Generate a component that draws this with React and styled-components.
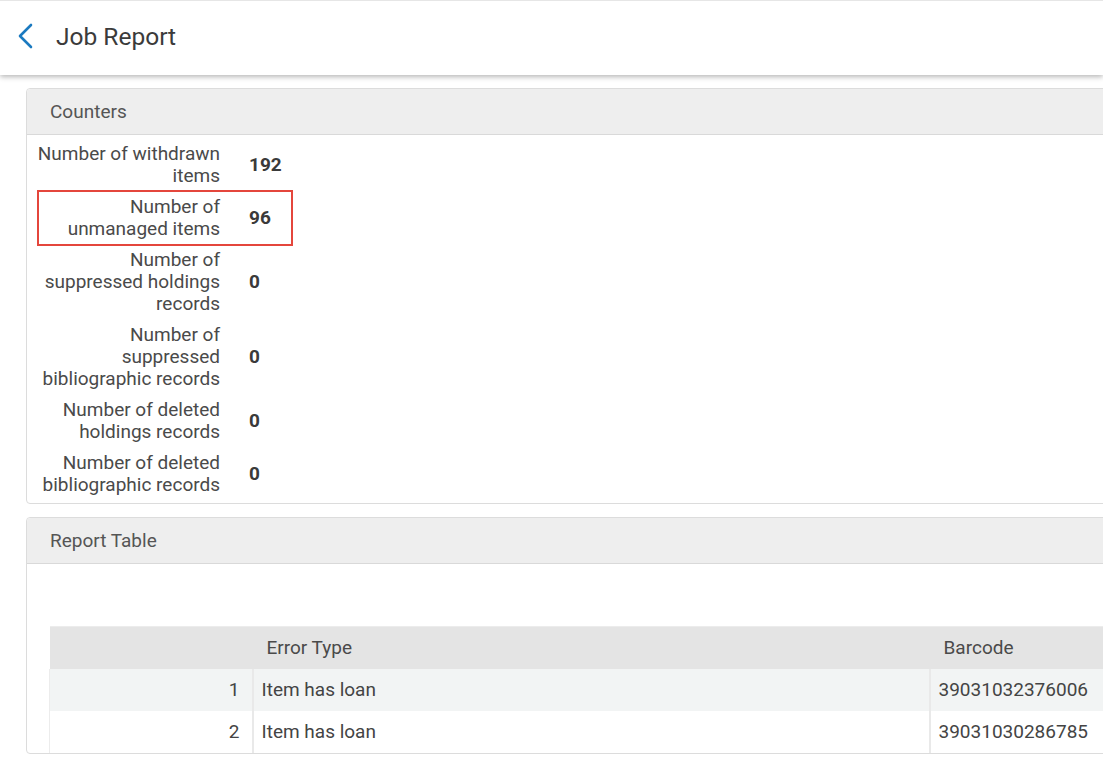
import React from 'react';
import styled, {createGlobalStyle} from 'styled-components';

const GlobalStyle = createGlobalStyle`
    html, body {
        margin: 0;
        padding: 0;
        background: #fff;
        overflow: hidden;
    }
    body {
        font-family: Roboto, "Liberation Sans", Arial, sans-serif;
        color: #444;
    }
`;

const Page = styled.div`
    width: 1103px;
    height: 757px;
    overflow: hidden;
`;

const TopBar = styled.header`
    height: 74px;
    display: flex;
    align-items: center;
    border-top: 1px solid #e6e6e6;
    background: #fff;
    box-shadow: 0 2px 5px rgba(0, 0, 0, 0.28);
    position: relative;
    z-index: 1;
`;

const BackButton = styled.button`
    border: 0;
    background: none;
    padding: 0;
    margin-left: 15px;
    width: 20px;
    height: 28px;
    display: flex;
    align-items: center;
    justify-content: center;
    cursor: pointer;
    position: relative;
    top: -2px;
`;

const Title = styled.h1`
    margin: 0 0 0 21px;
    font-size: 24.5px;
    font-weight: 400;
    color: #3b3b3b;
    position: relative;
    top: -2px;
`;

const Main = styled.main`
    padding: 13px 0 0 26px;
    display: flex;
    flex-direction: column;
    gap: 13px;
`;

const Panel = styled.section`
    width: 1100px;
    border: 1px solid #dcdcdc;
    border-radius: 4px;
    background: #fff;
`;

const PanelHeader = styled.div`
    height: 45px;
    display: flex;
    align-items: center;
    padding-left: 23px;
    background: #eeeeee;
    border-bottom: 1px solid #d9d9d9;
    border-radius: 4px 4px 0 0;
    font-size: 19px;
    color: #555;
`;

const CounterList = styled.div`
    padding: 3px 0 3px 8px;
    display: flex;
    flex-direction: column;
`;

const CounterRow = styled.div`
    position: relative;
    display: grid;
    grid-template-columns: 185px auto;
    column-gap: 29px;
    align-items: center;
    width: max-content;
    padding: 4.5px 0;
    font-size: 19px;
    line-height: 22px;

    ${p => p.$highlight && `
        &::after {
            content: '';
            position: absolute;
            top: -1px;
            bottom: -2px;
            left: 2px;
            right: -22px;
            border: 2px solid #e4463c;
        }
    `}
`;

const CounterLabel = styled.div`
    text-align: right;
    color: #4a4a4a;
`;

const CounterValue = styled.div`
    font-weight: 700;
    color: #3a3a3a;
`;

const TableWrap = styled.div`
    padding: 62px 0 0 22px;
`;

const Table = styled.table`
    border-collapse: collapse;
    table-layout: fixed;
    width: 1100px;
    font-size: 19px;
    color: #444;
`;

const HeadCell = styled.th`
    box-sizing: border-box;
    height: 42px;
    padding: 0 0 0 14px;
    background: #e4e4e4;
    border-top: 1px solid #ececec;
    font-weight: 400;
    text-align: left;
    color: #4a4a4a;
    width: ${p => p.$w ? `${p.$w}px` : 'auto'};
`;

const BodyRow = styled.tr`
    background: ${p => p.$shaded ? '#f2f4f4' : '#fff'};
`;

const Cell = styled.td`
    box-sizing: border-box;
    height: 42px;
    padding: 0 ${p => p.$right ? '12px' : '0'} 0 ${p => p.$right ? '0' : '8px'};
    text-align: ${p => p.$right ? 'right' : 'left'};
    white-space: nowrap;
    border-left: 2px solid #e9e9e9;
    &:first-child {
        border-left: 1px solid #ececec;
    }
`;

const counters = [
    {label: 'Number of withdrawn items', value: '192'},
    {label: 'Number of unmanaged items', value: '96', highlight: true},
    {label: 'Number of suppressed holdings records', value: '0'},
    {label: 'Number of suppressed bibliographic records', value: '0'},
    {label: 'Number of deleted holdings records', value: '0'},
    {label: 'Number of deleted bibliographic records', value: '0'},
];

const rows = [
    {n: 1, error: 'Item has loan', barcode: '39031032376006'},
    {n: 2, error: 'Item has loan', barcode: '39031030286785'},
];

const ChevronLeft = () => (
    <svg width="16" height="26" viewBox="0 0 16 26">
        <path d="M14 2 L3 13 L14 24" fill="none" stroke="#1b7ac0" strokeWidth="2.6" strokeLinecap="round" strokeLinejoin="round"/>
    </svg>
);

export default function App() {
    return (
        <Page>
            <GlobalStyle/>
            <TopBar>
                <BackButton aria-label="Back"><ChevronLeft/></BackButton>
                <Title>Job Report</Title>
            </TopBar>
            <Main>
                <Panel>
                    <PanelHeader>Counters</PanelHeader>
                    <CounterList>
                        {counters.map(c => (
                            <CounterRow key={c.label} $highlight={c.highlight}>
                                <CounterLabel>{c.label}</CounterLabel>
                                <CounterValue>{c.value}</CounterValue>
                            </CounterRow>
                        ))}
                    </CounterList>
                </Panel>
                <Panel>
                    <PanelHeader>Report Table</PanelHeader>
                    <TableWrap>
                        <Table>
                            <thead>
                                <tr>
                                    <HeadCell $w={203}></HeadCell>
                                    <HeadCell $w={677}>Error Type</HeadCell>
                                    <HeadCell>Barcode</HeadCell>
                                </tr>
                            </thead>
                            <tbody>
                                {rows.map((r, i) => (
                                    <BodyRow key={r.n} $shaded={i % 2 === 0}>
                                        <Cell $right>{r.n}</Cell>
                                        <Cell>{r.error}</Cell>
                                        <Cell>{r.barcode}</Cell>
                                    </BodyRow>
                                ))}
                            </tbody>
                        </Table>
                    </TableWrap>
                </Panel>
            </Main>
        </Page>
    );
}
